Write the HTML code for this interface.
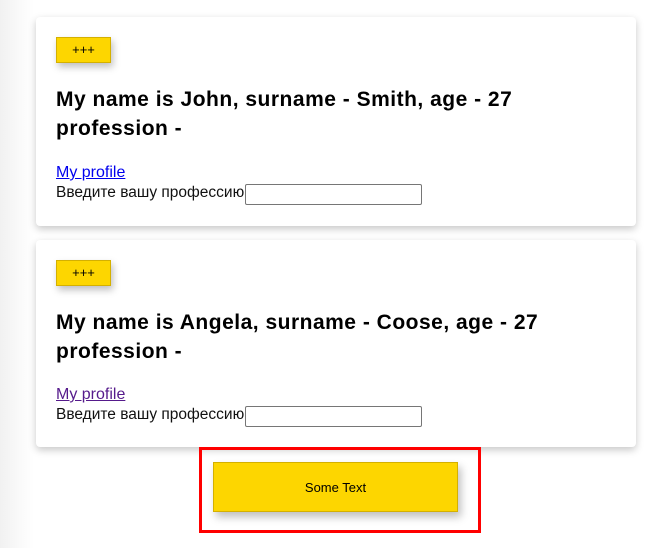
<!DOCTYPE html>
<html><head><meta charset="utf-8"><style>
body{margin:0;width:672px;height:548px;background:#fff;position:relative;overflow:hidden;font-family:"Liberation Sans",sans-serif;}
.shade{position:absolute;left:0;top:0;width:34px;height:548px;background:linear-gradient(to right,#f1f1f1,#fafafa 60%,#fff);}
.card{position:absolute;left:36px;width:600px;background:#fff;border-radius:4px;box-shadow:0 3px 8px rgba(0,0,0,.22);}
.btn{position:absolute;left:20px;top:20px;width:53px;height:24px;background:#fdd600;border:1px solid #d4b000;box-shadow:2px 4px 7px rgba(0,0,0,.25);font-size:13px;line-height:24px;text-align:center;}
h2{position:absolute;left:20px;top:68px;margin:0;font-size:21px;line-height:29px;font-weight:bold;width:490px;letter-spacing:0.5px;}
.link{position:absolute;left:20px;top:147px;font-size:16px;text-decoration:underline;}
.lbl{position:absolute;left:20px;top:167px;font-size:15.5px;color:#111;white-space:nowrap;}
.inp{position:absolute;left:209px;top:167px;width:175px;height:19px;border:1px solid #767676;border-radius:2px;background:#fff;}
.red{position:absolute;left:199px;top:447px;width:276px;height:80px;border:3px solid #f00;}
.big{position:absolute;left:213px;top:462px;width:243px;height:48px;background:#fdd600;border:1px solid #d4b000;box-shadow:3px 5px 8px rgba(0,0,0,.25);font-size:13px;line-height:50px;text-align:center;}
</style></head><body>
<div class="shade"></div>
<div class="card" style="top:17px;height:209px">
<div class="btn">+++</div>
<h2>My name is John, surname - Smith, age - 27 profession -</h2>
<span class="link" style="color:#0000ee">My profile</span>
<span class="lbl">Введите вашу профессию</span><div class="inp"></div>
</div>
<div class="card" style="top:240px;height:207px">
<div class="btn">+++</div>
<h2>My name is Angela, surname - Coose, age - 27 profession -</h2>
<span class="link" style="color:#551a8b;top:146px">My profile</span>
<span class="lbl" style="top:166px">Введите вашу профессию</span><div class="inp" style="top:166px"></div>
</div>
<div class="red"></div>
<div class="big">Some Text</div>
</body></html>
